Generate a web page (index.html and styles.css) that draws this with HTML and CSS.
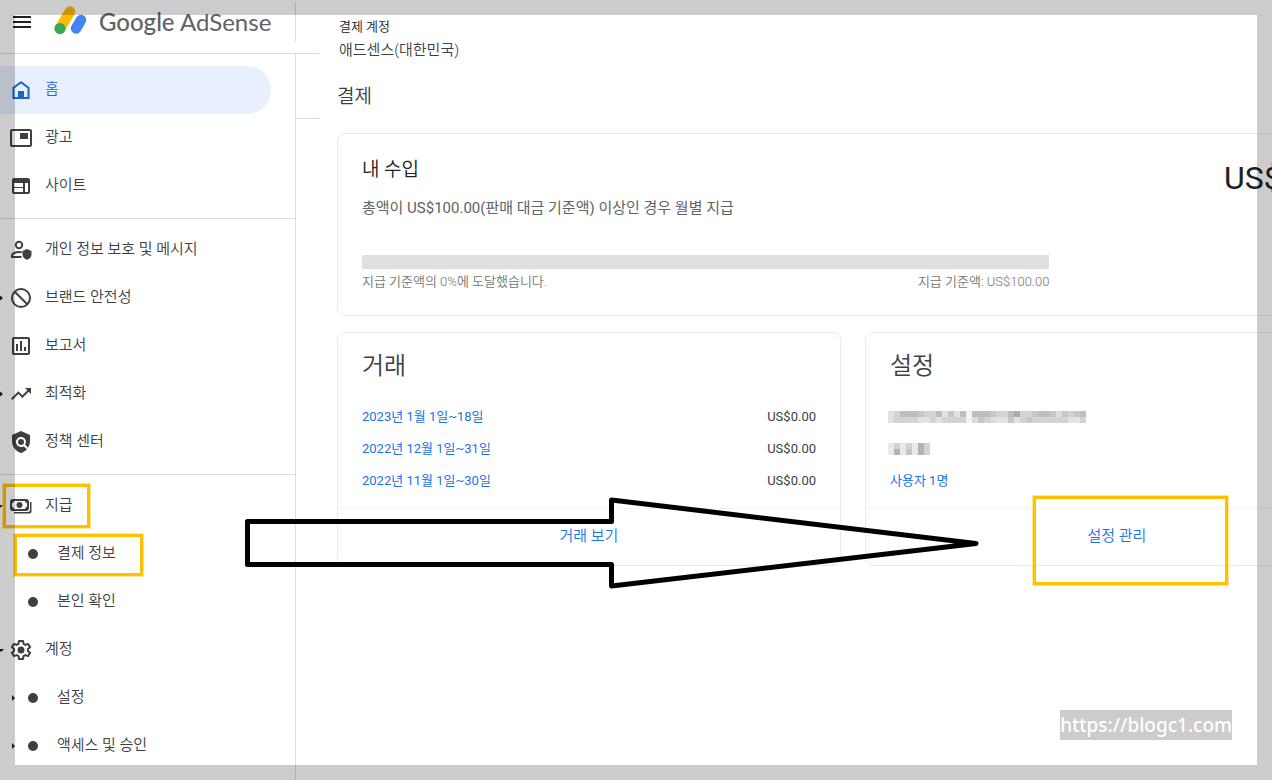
FILE: index.html
```html
<!DOCTYPE html>
<html lang="ko">
<head>
    <meta charset="UTF-8">
    <meta name="viewport" content="width=device-width, initial-scale=1">
    <title>Google AdSense - 결제</title>
    <link rel="stylesheet" href="styles.css">
</head>

<body>
<div class="app">
    <div class="side">
        <header class="masthead">
            <button class="menu_btn" type="button" aria-label="메뉴">
                <svg width="18" height="12" viewBox="0 0 18 12"><path d="M0 0h18v2H0zM0 5h18v2H0zM0 10h18v2H0z"/></svg>
            </button>
            <a class="logo" href="#">
                <svg width="34" height="32" viewBox="0 0 34 32" fill="none" stroke-linecap="round">
                    <path d="M6 24.500L16 7.500" stroke="#fbbc04" stroke-width="10.500"/>
                    <circle cx="6" cy="24.500" r="5.500" fill="#34a853"/>
                    <path d="M22 24.500L27 16" stroke="#4285f4" stroke-width="10.500"/>
                </svg>
                <span class="logo_text"><b>Google</b> AdSense</span>
            </a>
            <span class="masthead_line"></span>
        </header>

        <div class="side_body">
            <nav class="nav">
                <ul class="nav_group">
                    <li><a class="nav_item active" href="#">
                        <span class="caret"></span>
                        <svg class="icon" viewBox="0 0 24 24"><path fill-rule="evenodd" d="M12 3L3.500 9.200V21h17V9.200zM5.500 10.300L12 5.500l6.500 4.800V19h-13z"/><path d="M9 13h6v7H9z"/></svg>
                        <span>홈</span></a></li>
                    <li><a class="nav_item" href="#">
                        <span class="caret"></span>
                        <svg class="icon" viewBox="0 0 24 24"><path fill-rule="evenodd" d="M3 3h18a2 2 0 0 1 2 2v14a2 2 0 0 1-2 2H3a2 2 0 0 1-2-2V5c0-1.100.900-2 2-2zm0 2v14h18V5z"/><path d="M11 7h8v6h-8z"/></svg>
                        <span>광고</span></a></li>
                    <li><a class="nav_item" href="#">
                        <span class="caret"></span>
                        <svg class="icon" viewBox="0 0 24 24"><path fill-rule="evenodd" d="M5 4h14a2 2 0 0 1 2 2v12a2 2 0 0 1-2 2H5a2 2 0 0 1-2-2V6c0-1.100.900-2 2-2zm0 5v4h9V9zm0 5v4h9v-4zm11-5v9h3V9z"/></svg>
                        <span>사이트</span></a></li>
                </ul>
                <ul class="nav_group">
                    <li><a class="nav_item" href="#">
                        <span class="caret"></span>
                        <svg class="icon" viewBox="0 0 24 24"><circle cx="10" cy="7" r="3.200" fill="none" stroke="currentColor" stroke-width="2"/><path fill="none" stroke="currentColor" stroke-width="2" d="M12.500 19H3v-1.500c0-2 3.500-3.500 7-3.500 1 0 2 .1 3 .4"/><path d="M18 11l4.500 2v3.500c0 2.600-1.900 4.500-4.500 5.200-2.600-.7-4.500-2.600-4.500-5.200V13z"/></svg>
                        <span>개인 정보 보호 및 메시지</span></a></li>
                    <li><a class="nav_item" href="#">
                        <svg class="caret" viewBox="0 0 9 10"><path d="M-2 1L3 5l-5 4z"/></svg>
                        <svg class="icon" viewBox="0 0 24 24"><path fill="none" stroke="currentColor" stroke-width="2" d="M12 3a9 9 0 1 0 0 18a9 9 0 1 0 0-18zM5.700 5.700l12.600 12.600"/></svg>
                        <span>브랜드 안전성</span></a></li>
                    <li><a class="nav_item" href="#">
                        <span class="caret"></span>
                        <svg class="icon" viewBox="0 0 24 24"><path fill-rule="evenodd" d="M5 3h14a2 2 0 0 1 2 2v14a2 2 0 0 1-2 2H5a2 2 0 0 1-2-2V5c0-1.100.900-2 2-2zm0 2v14h14V5z"/><path d="M7 10h2v7H7zM11 7h2v10h-2zM15 13h2v4h-2z"/></svg>
                        <span>보고서</span></a></li>
                    <li><a class="nav_item" href="#">
                        <svg class="caret" viewBox="0 0 9 10"><path d="M-2 1L3 5l-5 4z"/></svg>
                        <svg class="icon" viewBox="0 0 24 24"><path d="M16 6l2.290 2.290-4.880 4.880-4-4L2 16.590 3.410 18l6-6 4 4 6.300-6.290L22 12V6z"/></svg>
                        <span>최적화</span></a></li>
                    <li><a class="nav_item" href="#">
                        <span class="caret"></span>
                        <svg class="icon" viewBox="0 0 24 24"><path d="M21 5l-9-4-9 4v6c0 5.550 3.840 10.740 9 12 2.300-.560 4.330-1.900 5.880-3.710l-3.120-3.120a5 5 0 1 1 1.410-1.410l2.900 2.900C20.290 15.690 21 13.380 21 11z"/><circle cx="12" cy="12" r="3"/></svg>
                        <span>정책 센터</span></a></li>
                </ul>
                <ul class="nav_group">
                    <li><a class="nav_item" href="#">
                        <svg class="caret" viewBox="0 0 9 10"><path d="M-3 4h6L0 7z"/></svg>
                        <svg class="icon" viewBox="0 0 24 24"><path fill-rule="evenodd" d="M4 5h13a3 3 0 0 1 3 3v6a3 3 0 0 1-3 3H4a3 3 0 0 1-3-3V8a3 3 0 0 1 3-3zm1 2a2 2 0 0 1-2 2v4a2 2 0 0 1 2 2h11a2 2 0 0 1 2-2V9a2 2 0 0 1-2-2z"/><circle cx="10.500" cy="11" r="3"/><path d="M21 8h1.500v9.500a2 2 0 0 1-2 2H5V18h14a2 2 0 0 0 2-2z"/></svg>
                        <span>지급</span></a></li>
                    <li><a class="nav_item sub" href="#">
                        <span class="caret"></span>
                        <svg class="icon" viewBox="0 0 24 24"><circle cx="12" cy="12" r="5"/></svg>
                        <span>결제 정보</span></a></li>
                    <li><a class="nav_item sub" href="#">
                        <span class="caret"></span>
                        <svg class="icon" viewBox="0 0 24 24"><circle cx="12" cy="12" r="5"/></svg>
                        <span>본인 확인</span></a></li>
                    <li><a class="nav_item" href="#">
                        <svg class="caret" viewBox="0 0 9 10"><path d="M-2 4h6L1 7z"/></svg>
                        <svg class="icon" viewBox="0 0 24 24"><path fill="none" stroke="currentColor" stroke-width="2" stroke-linejoin="round" d="M10 3h4l.5 2.800 1.900 1.100 2.700-1 2 3.400L18.900 11v2l2.200 1.700-2 3.400-2.700-1-1.900 1.100L14 21h-4l-.5-2.800-1.900-1.100-2.700 1-2-3.400L5.100 13v-2L2.900 9.300l2-3.400 2.700 1 1.900-1.100z"/><circle cx="12" cy="12" r="3.500"/></svg>
                        <span>계정</span></a></li>
                    <li><a class="nav_item sub" href="#">
                        <svg class="caret" viewBox="0 0 9 10"><path d="M0 2l3 3-3 3z"/></svg>
                        <svg class="icon" viewBox="0 0 24 24"><circle cx="12" cy="12" r="5"/></svg>
                        <span>설정</span></a></li>
                    <li><a class="nav_item sub" href="#">
                        <svg class="caret" viewBox="0 0 9 10"><path d="M0 2l3 3-3 3z"/></svg>
                        <svg class="icon" viewBox="0 0 24 24"><circle cx="12" cy="12" r="5"/></svg>
                        <span>액세스 및 승인</span></a></li>
                </ul>
            </nav>
            <div class="gutter"></div>
        </div>
    </div>

    <main class="main">
        <div class="account">
            <p class="account_label">결제 계정</p>
            <p class="account_name">애드센스(대한민국)</p>
        </div>
        <h1 class="page_title">결제</h1>

        <div class="cards">
            <section class="card earnings">
                <div class="earnings_top">
                    <div>
                        <h2 class="earnings_title">내 수입</h2>
                        <p class="earnings_desc">총액이 US$100.00(판매 대금 기준액) 이상인 경우 월별 지급</p>
                    </div>
                    <p class="amount">US$0.00</p>
                </div>
                <div class="progress">
                    <div class="progress_bar"></div>
                    <div class="progress_text">
                        <span>지급 기준액의 0%에 도달했습니다.</span>
                        <span>지급 기준액: US$100.00</span>
                    </div>
                </div>
            </section>

            <section class="card">
                <div class="card_body">
                    <h2 class="card_title">거래</h2>
                    <table class="trans">
                        <tr>
                            <td><a href="#">2023년 1월 1일~18일</a></td>
                            <td class="td_right">US$0.00</td>
                        </tr>
                        <tr>
                            <td><a href="#">2022년 12월 1일~31일</a></td>
                            <td class="td_right">US$0.00</td>
                        </tr>
                        <tr>
                            <td><a href="#">2022년 11월 1일~30일</a></td>
                            <td class="td_right">US$0.00</td>
                        </tr>
                    </table>
                </div>
                <div class="card_foot"><a href="#">거래 보기</a></div>
            </section>

            <section class="card">
                <div class="card_body">
                    <h2 class="card_title">설정</h2>
                    <ul class="settings">
                        <li>
                            <svg class="masked" width="198" height="12" viewBox="0 0 33 2" shape-rendering="crispEdges">
                                <rect width="33" height="2" fill="#d3d3d3"/>
                                <path fill="#e2e2e2" d="M0 0h1v2H0zM9 0h1v1H9zM11 0h1v1h-1zM5 1h2v1H5zM8 1h1v1H8zM18 1h2v1h-2zM21 1h1v1h-1zM30 1h2v1h-2z"/>
                                <path fill="#bebebe" d="M2 0h3v1H2zM8 0h1v1H8zM12 0h1v1h-1zM14 0h3v1h-3zM20 0h1v1h-1zM25 0h2v1h-2zM32 0h1v1h-1z"/>
                                <path fill="#c7c7c7" d="M5 0h1v1H5zM10 0h1v1h-1zM17 0h1v1h-1zM24 0h1v1h-1zM27 0h1v1h-1zM29 0h1v1h-1zM31 0h1v1h-1zM15 1h1v1h-1zM20 1h1v1h-1zM23 1h1v1h-1z"/>
                                <path fill="#dcdcdc" d="M28 0h1v1h-1zM14 1h1v1h-1zM17 1h1v1h-1z"/>
                                <path fill="#f4f4f4" d="M13 0h1v2h-1z"/>
                                <path fill="#aaa" d="M21 0h1v1h-1z"/>
                            </svg>
                        </li>
                        <li>
                            <svg class="masked" width="42" height="12" viewBox="0 0 7 2" shape-rendering="crispEdges">
                                <rect width="7" height="2" fill="#e9e9e9"/>
                                <path fill="#d2d2d2" d="M1 0h1v1H1zM3 0h1v1H3zM6 0h1v2H6z"/>
                                <path fill="#b2b2b2" d="M1 1h1v1H1zM5 0h1v2H5z"/>
                                <path fill="#c4c4c4" d="M3 1h1v1H3z"/>
                            </svg>
                        </li>
                        <li><a href="#">사용자 1명</a></li>
                    </ul>
                </div>
                <div class="card_foot"><a href="#">설정 관리</a></div>
            </section>
        </div>
    </main>

    <!-- 설명용 표시 -->
    <div class="mark mark_pay"></div>
    <div class="mark mark_info"></div>
    <div class="mark mark_manage"></div>
    <svg class="arrow" width="736" height="92" viewBox="0 0 736 92" fill="none" stroke="#000" stroke-width="5" stroke-linejoin="round">
        <path d="M3.500 24.500h364V3L732 46.500 367.500 89V67.500H3.500z"/>
    </svg>
    <div class="frame"></div>
    <div class="watermark">https://blogc1.com</div>
</div>
</body>
</html>
```
FILE: styles.css
```css
*{
    box-sizing: border-box;
}
body{
    margin: 0;
    background: #fff;
    color: #3c4043;
    font-family: Roboto, "Noto Sans CJK KR", sans-serif;
    font-size: 15px;
    font-weight: 350;
    line-height: 24px;
}
h1,h2,p,ul{
    margin: 0;
    padding: 0;
    font-weight: 350;
}
ul{
    list-style: none;
}
a{
    color: #1a73e8;
    text-decoration: none;
}

.app{
    position: relative;
    display: flex;
    height: 100vh;
    overflow: hidden;
}

/*왼쪽 메뉴*/
.side{
    flex: none;
    width: 319px;
    display: flex;
    flex-direction: column;
}
.masthead{
    flex: none;
    display: flex;
    align-items: center;
    height: 54px;
    padding: 0 23px 10px 13px;
    border-bottom: 1px solid #dadce0;
}
.menu_btn{
    display: flex;
    padding: 0;
    border: 0;
    background: none;
    fill: #202124;
}
.logo{
    display: flex;
    align-items: center;
    gap: 11px;
    margin-left: 23px;
}
.logo svg{
    margin-bottom: 4px;
}
.logo_text{
    color: #5f6368;
    font-family: Lato, sans-serif;
    font-size: 24px;
    font-weight: 400;
    white-space: nowrap;
}
.logo_text b{
    font-weight: 500;
}
.masthead_line{
    width: 1px;
    height: 40px;
    margin-left: auto;
    background: #dadce0;
}
.side_body{
    flex: 1;
    display: flex;
}
.nav{
    width: 296px;
    border-right: 1px solid #dadce0;
}
.nav_group{
    padding: 7px 0 8px;
    border-bottom: 1px solid #dadce0;
}
.nav_group:first-child{
    padding-top: 12px;
}
.nav_group:last-child{
    border-bottom: 0;
}
.nav_item{
    display: flex;
    align-items: center;
    height: 48px;
    margin-right: 24px;
    border-radius: 0 24px 24px 0;
    color: #3c4043;
}
.nav_item.active{
    background: #e8f0fe;
    color: #1967d2;
}
.nav_item.sub{
    padding-left: 12px;
}
.nav_item > span:last-child{
    padding: 0 0 2px 12px;
}
.caret{
    flex: none;
    width: 9px;
    height: 10px;
    fill: #202124;
}
.icon{
    flex: none;
    width: 24px;
    height: 24px;
    fill: currentColor;
}
.gutter{
    flex: 1;
    height: 65px;
    border-bottom: 1px solid #dadce0;
}

/*본문*/
.main{
    flex: 1;
    min-width: 0;
    padding: 17px 0 0 18px;
}
.account{
    padding-left: 2px;
}
.account_label{
    color: #202124;
    font-size: 13px;
    line-height: 20px;
}
.account_name{
    line-height: 26px;
}
.page_title{
    margin: 20px 0 22px;
    font-size: 19px;
    line-height: 28px;
}
/*카드는 화면 오른쪽 밖까지 이어진다*/
.cards{
    display: grid;
    grid-template-columns: 1fr 1fr;
    gap: 16px 24px;
    margin-right: -97px;
}
.card{
    border: 1px solid #e8eaed;
    border-radius: 8px;
}
.earnings{
    grid-column: 1 / 3;
    padding: 20px 24px 20px;
}
.earnings_top{
    display: flex;
    justify-content: space-between;
}
.earnings_title{
    color: #202124;
    font-size: 19px;
    line-height: 32px;
}
.earnings_desc{
    margin-top: 10px;
    color: #5f6368;
    font-weight: 400;
}
.amount{
    color: #202124;
    font-size: 32px;
    font-weight: 400;
    line-height: 48px;
}
.progress{
    width: 70%;
    margin-top: 35px;
}
.progress_bar{
    height: 14px;
    background: #e0e0e0;
}
.progress_text{
    display: flex;
    justify-content: space-between;
    color: #757575;
    font-size: 13px;
    line-height: 26px;
}
.card_body{
    padding: 16px 24px 11px;
}
.card_title{
    margin-bottom: 18px;
    font-size: 24px;
    line-height: 34px;
}
.trans{
    width: 100%;
    border-collapse: collapse;
    font-size: 13px;
    font-weight: 400;
}
.trans td{
    height: 32px;
    padding: 0;
}
.trans .td_right{
    text-align: right;
}
.settings{
    font-size: 13px;
    font-weight: 400;
}
.settings li{
    display: flex;
    align-items: center;
    height: 32px;
}
.masked{
    margin-left: -2px;
}
.card_foot{
    padding: 15px 24px 17px;
    border-top: 1px solid #f1f3f4;
    text-align: center;
}

/*강조 상자와 화살표*/
.mark{
    position: absolute;
    border: 3px solid #ffc000;
    outline: 1px solid rgba(255, 192, 0, 0.4);
}
.mark_pay{
    left: 3px;
    top: 484px;
    width: 87px;
    height: 44px;
}
.mark_info{
    left: 14px;
    top: 534px;
    width: 129px;
    height: 42px;
}
.mark_manage{
    left: 1033px;
    top: 496px;
    width: 195px;
    height: 89px;
}
.arrow{
    position: absolute;
    left: 244px;
    top: 497px;
}
.frame{
    position: absolute;
    inset: 0;
    border: 15px solid rgba(0, 0, 0, 0.2);
    pointer-events: none;
}
.watermark{
    position: absolute;
    right: 40px;
    bottom: 40px;
    background: #ccc;
    color: #fff;
    font-family: "Noto Sans", sans-serif;
    font-size: 19px;
    font-weight: 500;
    line-height: 30px;
}
```
